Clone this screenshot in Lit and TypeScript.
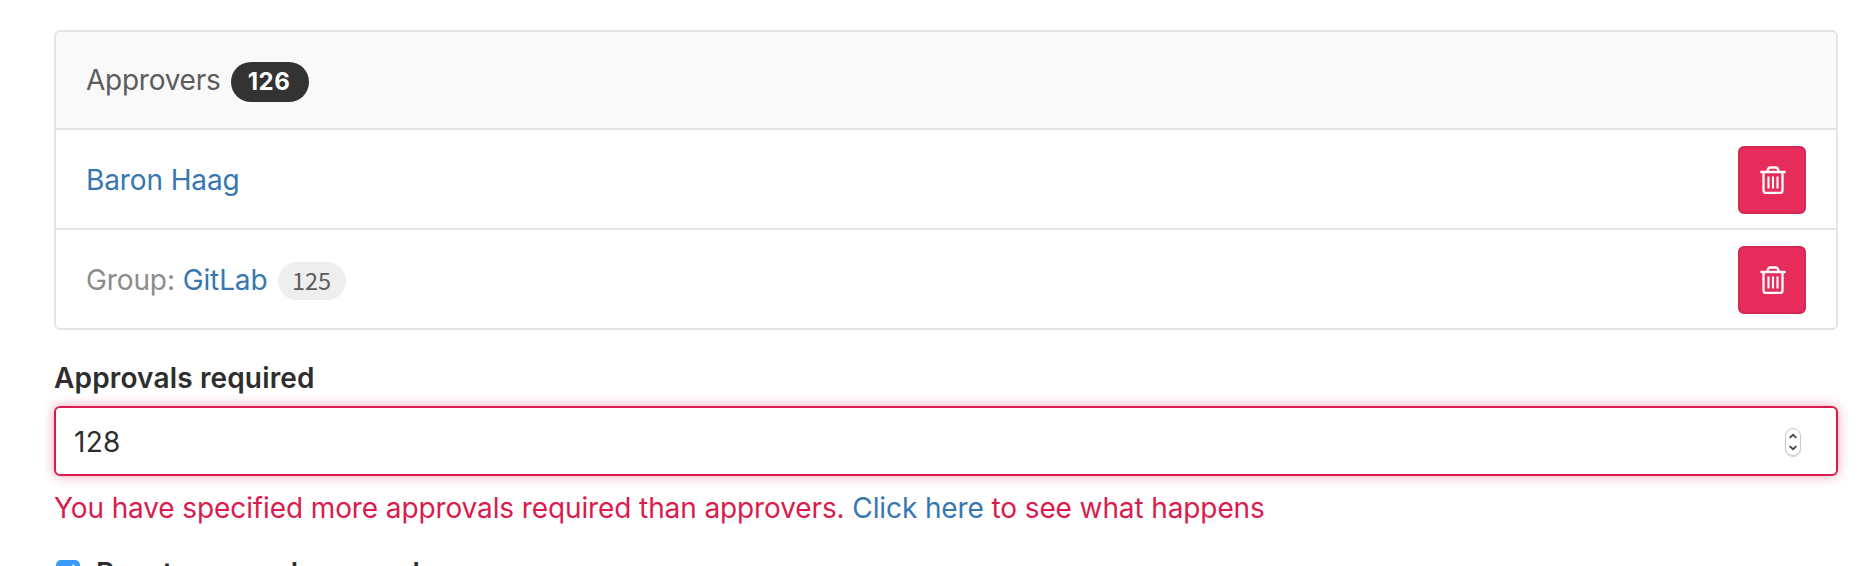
import { LitElement, html, css } from "lit";
import { customElement } from "lit/decorators.js";

@customElement("trash-button")
class TrashButton extends LitElement {
  static styles = css`
    :host { display: block; }
    .btn {
      display: flex; align-items: center; justify-content: center;
      box-sizing: border-box; width: 68px; height: 68px; padding: 0 0 0 1px;
      color: #fff; background: #e52c5a; border: 2px solid #d22852; border-radius: 6px;
    }
    .icon { display: block; width: 26px; height: 28px; }
  `;
  render() {
    return html`<button class="btn" aria-label="Remove">
      <svg class="icon" viewBox="0 0 26 28" fill="none" stroke="currentColor">
        <path d="M.4 6H25.6" stroke-width="2.4"/>
        <path d="M7.3 5.6L8 3.1Q8.6 1.5 10.2 1.5H15.8Q17.4 1.5 18 3.1L18.7 5.6" stroke-width="2.3"/>
        <path d="M3.5 6.5V24.6Q3.5 27 5.9 27H20.1Q22.5 27 22.5 24.6V6.5" stroke-width="2.3"/>
        <path d="M8.5 10.5V22.5M13 10.5V22.5M17.5 10.5V22.5" stroke-width="2.1"/>
      </svg>
    </button>`;
  }
}

@customElement("app-root")
class AppRoot extends LitElement {
  static styles = css`
    :host {
      display: block; height: 566px; overflow: hidden; background: #fff;
      font: 28px/40px Inter, "Liberation Sans", sans-serif; color: #2e2e2e;
      letter-spacing: -.11px;
    }
    .page { padding: 30px 32px 0 54px; }
    .panel { border: 2px solid #e5e5e5; border-radius: 6px; overflow: hidden; }
    .head, .row {
      display: flex; align-items: center; box-sizing: border-box;
      padding: 0 30px 0 30px; white-space: pre;
    }
    .head { height: 96px; background: #f9f9f9; color: #5c5c5c; }
    .title { letter-spacing: -.25px; }
    .row { height: 100px; padding-top: 2px; border-top: 2px solid #e5e5e5; }
    .grow { flex: 1; display: flex; align-items: center; }
    .link { color: #3777b0; text-decoration: none; }
    .muted { color: #8c8c8c; }
    .count {
      display: flex; align-items: center; justify-content: center; box-sizing: border-box;
      width: 78px; height: 40px; margin: 4px 0 0 10px; padding: 0 1px 1px 0; border-radius: 20px;
      background: #333; color: #fff; font-size: 24px; font-weight: 700; letter-spacing: .5px;
    }
    .count.soft {
      width: 68px; height: 38px; margin: 2px 0 0 10px; padding: 0 0 3px;
      background: #eee; color: #5c5c5c; letter-spacing: 0;
      font: 400 23.5px/34px "Noto Sans CJK SC", "Noto Sans", sans-serif;
    }
    .label { display: block; margin-top: 28px; height: 40px; font-weight: 600; letter-spacing: .15px; white-space: nowrap; }
    .field {
      display: flex; align-items: center; justify-content: space-between; box-sizing: border-box;
      height: 70px; margin-top: 8px; padding: 2px 35px 0 18px;
      border: 2px solid #d91c4d; border-radius: 6px; box-shadow: 0 0 12px rgba(217, 28, 77, .4);
    }
    .value { letter-spacing: .3px; }
    .stepper {
      display: flex; align-items: center; justify-content: center; box-sizing: border-box;
      width: 16px; height: 28px; border: 1px solid #c8c8c8; border-radius: 8px;
      box-shadow: 0 1px 1px rgba(0, 0, 0, .18);
    }
    .error { margin-top: 12px; color: #d91c4d; white-space: pre; }
    .check {
      display: flex; align-items: flex-start; margin-top: 24px; padding-left: 2px;
      font-weight: 600; white-space: nowrap; letter-spacing: .08px;
    }
    .box { width: 24px; height: 24px; margin: 8px 16px 0 0; border-radius: 5px; background: #3b99fc; }
    .caption { padding-top: 1px; }
    .box svg, .stepper svg { display: block; }
  `;
  render() {
    return html`<div class="page">
      <section class="panel">
        <header class="head"><span class="title">Approvers</span><span class="count">126</span></header>
        <div class="row"><div class="grow"><a class="link">Baron Haag</a></div><trash-button></trash-button></div>
        <div class="row"><div class="grow"><span class="muted">Group: </span><a class="link">GitLab</a><span class="count soft">125</span></div><trash-button></trash-button></div>
      </section>
      <label class="label">Approvals required</label>
      <div class="field"><span class="value">128</span>
        <span class="stepper"><svg width="8" height="18" viewBox="0 0 8 18" fill="none" stroke="#444" stroke-width="1.8"><path d="M.6 4.8L4 1.8L7.4 4.8M.6 13.2L4 16.2L7.4 13.2"/></svg></span>
      </div>
      <div class="error">You have specified more approvals required than approvers. <a class="link">Click here</a> to see what happens</div>
      <div class="check"><span class="box"><svg width="24" height="24" viewBox="0 0 24 24" fill="none" stroke="#fff" stroke-width="2.6"><path d="M6 12.5L10.5 18L18 5"/></svg></span><span class="caption">Reset approvals on push</span></div>
    </div>`;
  }
}
